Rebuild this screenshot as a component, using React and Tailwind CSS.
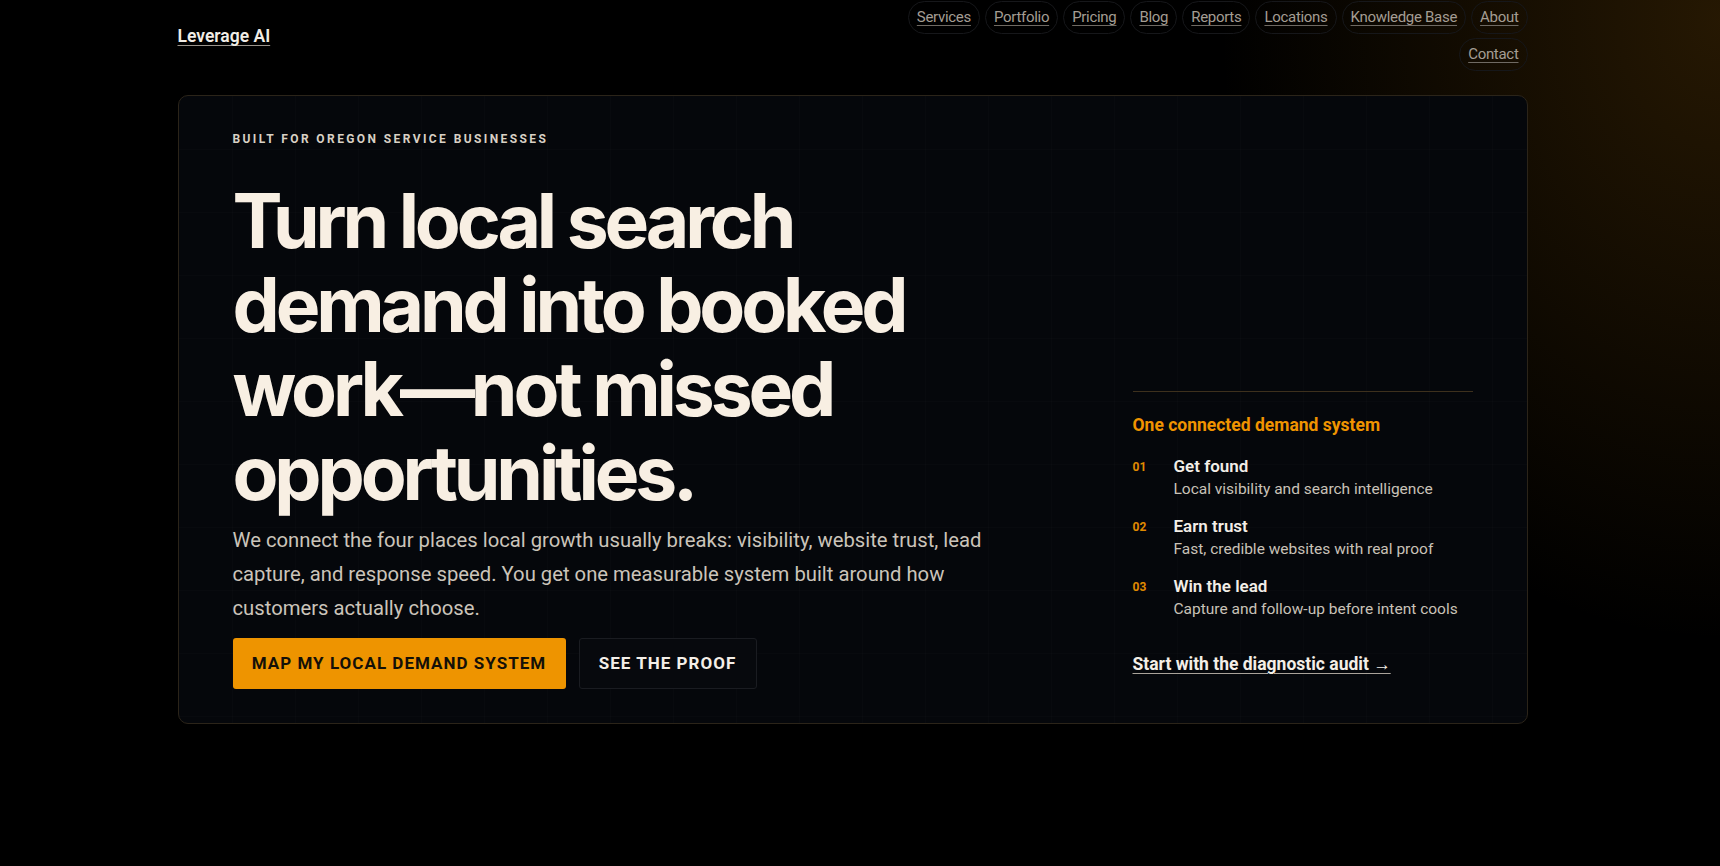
import React from "react";

const navItems = ["Services", "Portfolio", "Pricing", "Blog", "Reports", "Locations", "Knowledge Base", "About", "Contact"];

const steps = [
  { n: "01", t: "Get found", d: "Local visibility and search intelligence" },
  { n: "02", t: "Earn trust", d: "Fast, credible websites with real proof" },
  { n: "03", t: "Win the lead", d: "Capture and follow-up before intent cools" },
];

export default function App() {
  return (
    <div className="min-h-screen bg-black bg-[radial-gradient(ellipse_500px_620px_at_100%_20px,rgba(150,95,10,0.25),transparent_100%)] font-['Roboto','Liberation_Sans',sans-serif] text-[#e9e3da]">
      <div className="pr-[15px]">
        <div className="mx-auto max-w-[1350px]">
          <header className="flex items-center justify-between">
            <a href="#" className="mt-[3px] text-[17.5px] font-semibold leading-none text-[#f1ede6] underline underline-offset-[3px] decoration-[#9a948c]">
              Leverage AI
            </a>
            <nav className="flex max-w-[640px] flex-wrap justify-end gap-x-[5px] gap-y-[4px] pt-px">
              {navItems.map((item) => (
                <a
                  key={item}
                  href="#"
                  className="rounded-full border border-[#16171a] px-[8px] py-[5px] text-[15px] leading-[21px] tracking-[-0.02em] text-[#a49d93] underline underline-offset-[3px] decoration-[#6f6a63]"
                >
                  {item}
                </a>
              ))}
            </nav>
          </header>

          <section className="relative mt-[24px] overflow-hidden rounded-[10px] border border-[#2b2419] bg-[#05070b]">
            <div className="pointer-events-none absolute inset-0 bg-[linear-gradient(rgba(255,255,255,0.012)_1px,transparent_1px),linear-gradient(90deg,rgba(255,255,255,0.012)_1px,transparent_1px)] bg-[size:63px_63px] bg-[position:-10px_-10px]"></div>
            <div className="relative flex items-end justify-between px-[54px] pt-[35px] pb-[34px]">
              <div className="w-[800px]">
                <p className="text-[12px] font-bold uppercase leading-[16px] tracking-[0.2em] text-[#d9d1c5]">
                  Built for Oregon service businesses
                </p>
                <h1 className="mt-[32px] font-['Inter','Roboto',sans-serif] text-[75px] font-bold leading-[84px] tracking-[-0.055em] text-[#f8efe3]">
                  Turn local search
                  <br />
                  demand into booked
                  <br />
                  work—not missed
                  <br />
                  opportunities.
                </h1>
                <p className="mt-[8px] max-w-[790px] text-[20.25px] leading-[34px] text-[#cbc4ba]">
                  We connect the four places local growth usually breaks: visibility, website trust, lead capture, and response speed. You get one measurable system built around how customers actually choose.
                </p>
                <div className="mt-[13px] flex gap-[13px]">
                  <a
                    href="#"
                    className="flex h-[51px] w-[333px] items-center justify-center rounded-[3px] bg-[#ee9400] text-[17px] font-bold uppercase tracking-[0.06em] text-[#141008]"
                  >
                    Map my local demand system
                  </a>
                  <a
                    href="#"
                    className="flex h-[51px] w-[178px] items-center justify-center rounded-[3px] border border-[#1a1c21] bg-[#07090d] text-[17px] font-bold uppercase tracking-[0.06em] text-[#f4efe8]"
                  >
                    See the proof
                  </a>
                </div>
              </div>

              <div className="mb-[12px] w-[340px] border-t border-[#3d301d] pt-[22px]">
                <h2 className="text-[17.5px] font-bold leading-[22px] text-[#f09400]">One connected demand system</h2>
                <ul className="mt-[20px] flex flex-col gap-[16px]">
                  {steps.map((s) => (
                    <li key={s.n} className="flex">
                      <span className="w-[41px] shrink-0 pt-[3px] text-[12px] font-bold leading-[16px] text-[#e08a00]">{s.n}</span>
                      <div>
                        <div className="text-[17px] font-semibold leading-[21px] text-[#f3eee7]">{s.t}</div>
                        <div className="mt-[2px] text-[15.5px] leading-[21px] text-[#c9c2b8]">{s.d}</div>
                      </div>
                    </li>
                  ))}
                </ul>
                <a
                  href="#"
                  className="mt-[33px] inline-block text-[17.5px] font-bold leading-[22px] text-[#f3eee7] underline underline-offset-[3px] decoration-[#a9a39a]"
                >
                  Start with the diagnostic audit →
                </a>
              </div>
            </div>
          </section>
        </div>
      </div>
    </div>
  );
}
